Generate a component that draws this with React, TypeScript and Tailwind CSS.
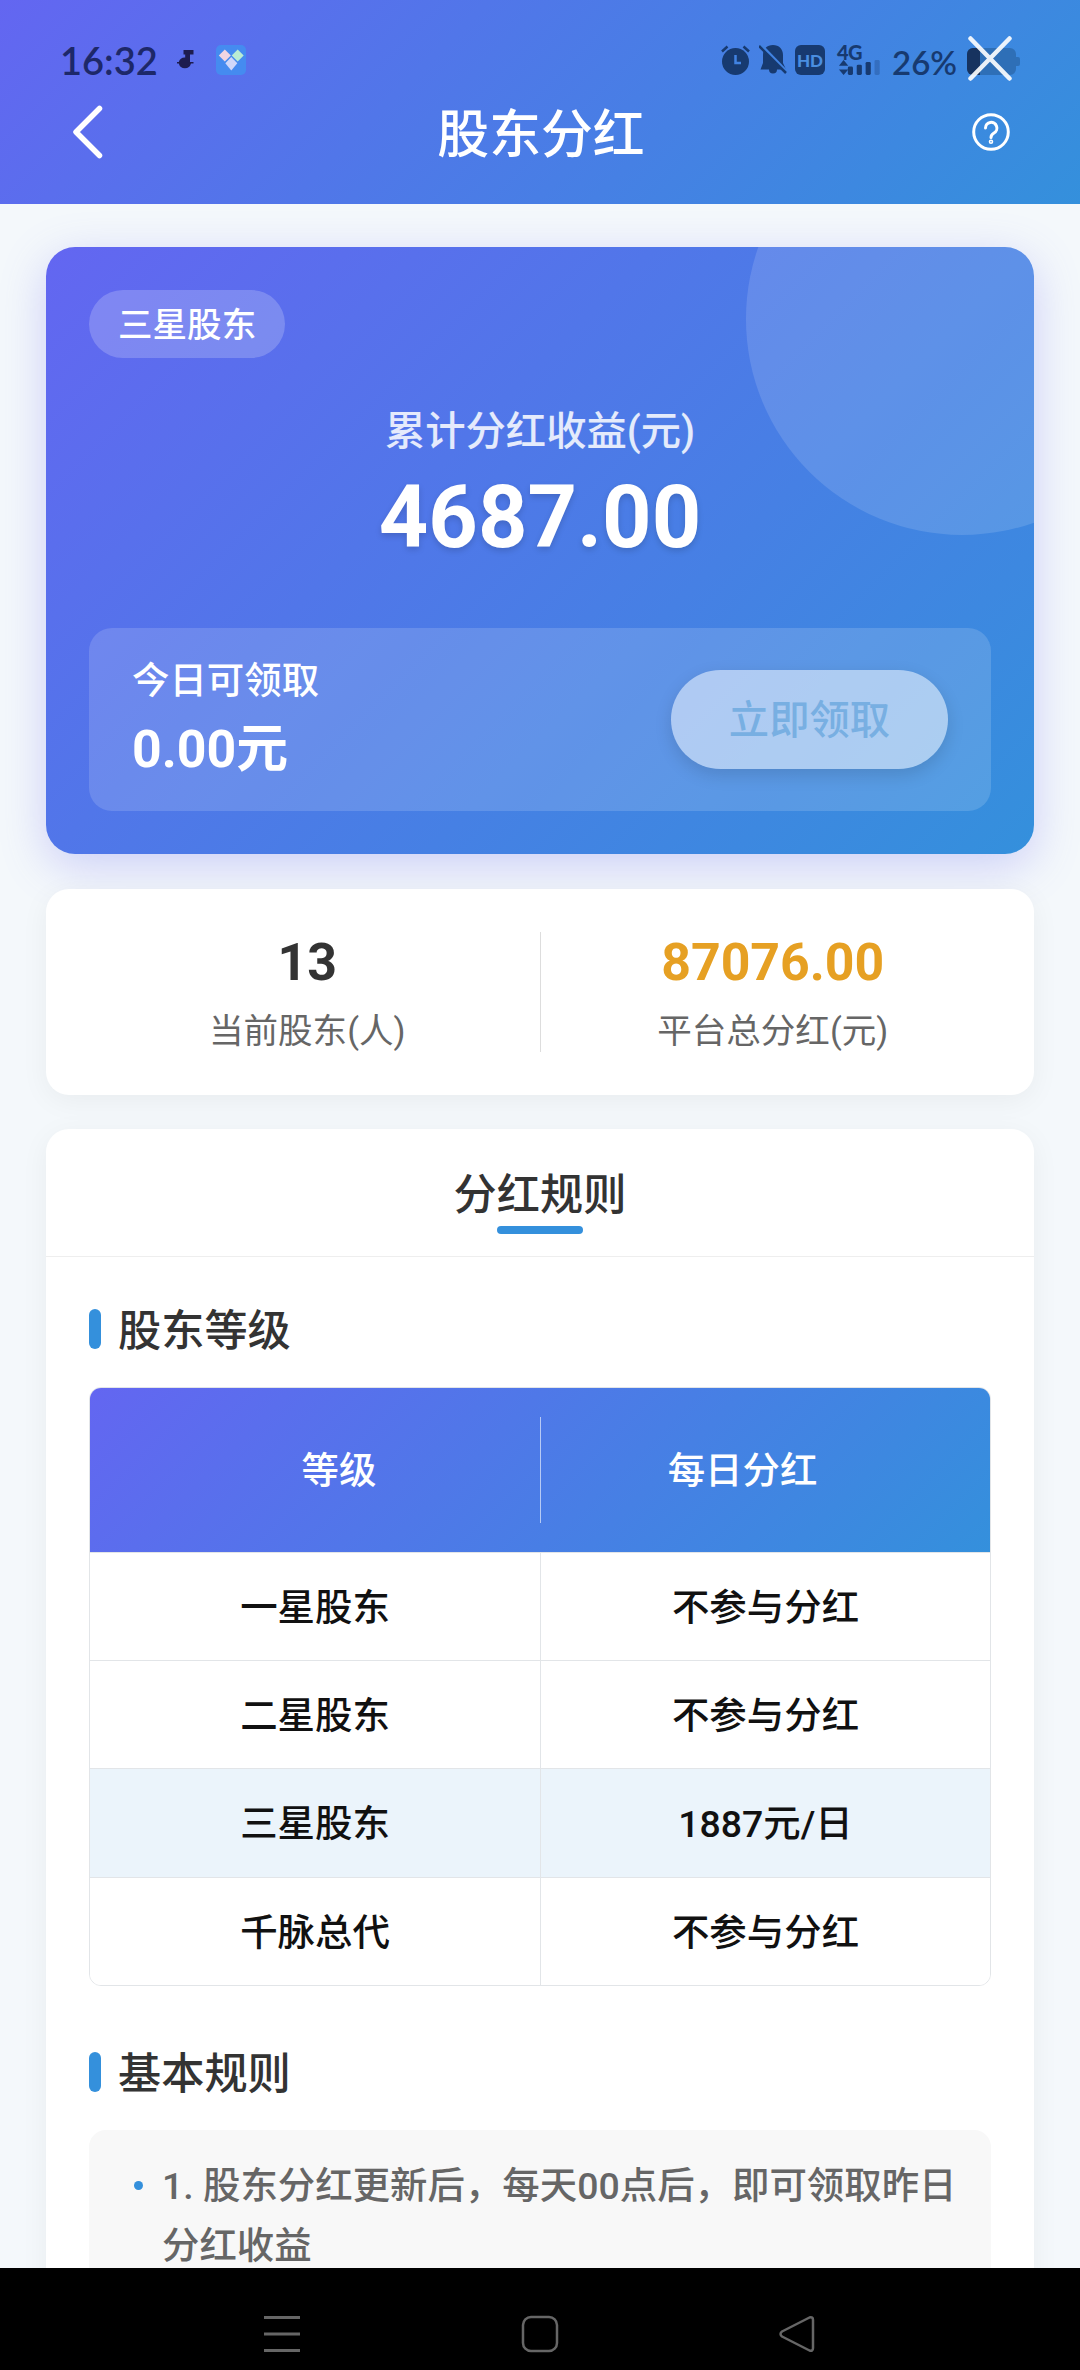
import type { ReactNode } from "react";

const levels = [
  { name: "一星股东", bonus: "不参与分红" },
  { name: "二星股东", bonus: "不参与分红" },
  { name: "三星股东", bonus: "1887元/日", current: true },
  { name: "千脉总代", bonus: "不参与分红" },
];

const rules = ["1. 股东分红更新后，每天00点后，即可领取昨日分红收益"];

const StatusBar = () => {
  return (
    <div className="flex h-[84px] justify-between pt-[36px] pr-[60px] pl-[60px] font-[Lato,sans-serif]">
      <div className="flex h-[48px] items-center text-[#1d2869]">
        <span className="w-[117px] text-[38px] leading-[48px] font-semibold">16:32</span>
        <svg className="h-[20px] w-[17px]" viewBox="0 0 17 20" fill="#1d1c4f">
          <path d="M6.500 0H16.500v4.500H13V12h3.500v1.500H14A6.300 6.300 0 0 1 1.800 13.500H0V12h1.800A6.300 6.300 0 0 1 8.200 7.500V4.500H6.500z" />
        </svg>
        <svg className="ml-[22px] size-[30px]" viewBox="0 0 30 30">
          <rect width="30" height="30" rx="5" fill="#458bf0" />
          <path d="M8.800 4.500l6 6-6 6-6-6z" fill="#f0d5e2" />
          <path d="M21.700 4.500l6 6-6 6-6-6z" fill="#b9ecd3" />
          <path d="M15.300 12l6 6.300-6 7.200-6-7.200z" fill="#cfd7fa" />
        </svg>
      </div>

      <div className="flex h-[48px] items-center text-[#173a70]">
        {/* Alarm */}
        <svg className="h-[30px] w-[29px]" viewBox="0 0 29 30" fill="none">
          <circle cx="14.500" cy="16.500" r="13.500" fill="currentColor" />
          <path d="M1 6.500l5.500-5M28 6.500l-5.500-5" stroke="currentColor" strokeWidth="2.500" />
          <path d="M14.500 10v8h5.500" stroke="#4183e2" strokeWidth="2.500" />
        </svg>
        {/* Muted bell */}
        <svg className="ml-[9px] h-[30px] w-[28px]" viewBox="0 0 28 30">
          <path d="M14 0c6 0 10 4 10 10v8l3 6.500H18a4 4 0 0 1-8 0H1.500L4 18v-8C4 4 8 0 14 0z" fill="currentColor" />
          <path d="M2 0l26 27" stroke="#4183e2" strokeWidth="3" />
          <path d="M0 1l27 27" stroke="currentColor" strokeWidth="2.500" />
        </svg>
        <span className="ml-[8px] flex size-[30px] items-center justify-center rounded-[6px] bg-[#173a70] text-[17px] leading-none font-black text-[#4a8ee0]">
          HD
        </span>
        <div className="ml-[12px] flex h-[30px] w-[46px] flex-col justify-between">
          <span className="h-[15px] text-[20px] leading-[15px] font-black tracking-[-0.5px]">4G</span>
          <svg className="h-[16px] w-[46px]" viewBox="0 0 46 16" fill="currentColor">
            <path d="M5.500 0l5 6H.5zM5.500 16l5-6H.5z" />
            <rect y="7" x="10" width="5.500" height="9" rx="1.500" />
            <rect y="5" x="19.500" width="5.500" height="11" rx="1.500" />
            <rect y="2" x="29" width="5.500" height="14" rx="1.500" />
            <rect y="0" x="38.500" width="5.500" height="16" rx="1.500" opacity=".3" />
          </svg>
        </div>
        <span className="ml-[9px] w-[75px] pt-[5px] text-[33px] leading-[43px] font-semibold">26%</span>
        <svg className="mt-[3px] h-[27px] w-[53px]" viewBox="0 0 53 27">
          <path d="M6 0H43a6 6 0 0 1 6 6v3h2a2 2 0 0 1 2 2v5a2 2 0 0 1-2 2h-2v3a6 6 0 0 1-6 6H6a6 6 0 0 1-6-6V6a6 6 0 0 1 6-6z" fill="#2e6fb7" />
          <path d="M6 0h7v27H6a6 6 0 0 1-6-6V6a6 6 0 0 1 6-6z" fill="#17335f" />
        </svg>
      </div>
    </div>
  );
};

const Header = () => {
  return (
    <header className="relative h-[204px] shrink-0 bg-[linear-gradient(135deg,#6366f1,#3490dc)]">
      <StatusBar />
      <div className="flex h-[96px] items-center justify-between pr-[70px] pl-[72px] text-white">
        <svg className="h-[54px] w-[38px]" viewBox="0 0 38 54" fill="none" stroke="currentColor" strokeWidth="5.500" strokeLinecap="round" strokeLinejoin="round">
          <path d="M27.500 3.500L4 27l23.500 23.500" />
        </svg>
        <h1 className="pt-[7px] text-[51.84px] leading-none font-medium">股东分红</h1>
        <svg className="h-[38px] w-[38px]" viewBox="0 0 38 38" fill="none" stroke="currentColor" strokeWidth="3" strokeLinecap="round">
          <circle cx="19" cy="19" r="17.300" />
          <path d="M13.500 15a5.700 5.700 0 1 1 8.500 5c-2 1.200-3 2.200-3 4.500" />
          <circle cx="19" cy="28.800" r=".8" />
        </svg>
      </div>

      {/* Floating close button over the status bar */}
      <svg className="absolute top-[35px] left-[967px] size-[46px]" viewBox="0 0 46 46" stroke="#fff" strokeOpacity=".9" strokeWidth="4.500" strokeLinecap="round">
        <path d="M3.500 3.500l39 40M42.500 3.500l-39 40" />
      </svg>
    </header>
  );
};

const BonusCard = () => {
  return (
    <section className="relative h-[607px] shrink-0 overflow-hidden rounded-[29px] bg-[linear-gradient(135deg,#6366f1,#3490dc)] px-[43px] pt-[43px] text-white">
      <div className="absolute -top-[144px] -right-[144px] size-[432px] rounded-full bg-white/[0.13]" />
      <div className="relative flex flex-col">
        <span className="flex h-[68px] items-center self-start rounded-full bg-white/20 px-[29px] pt-[3px] text-[34.56px] font-medium">
          三星股东
        </span>
        <p className="mt-[45px] text-center text-[40.32px] leading-[58px] font-medium text-white/85">累计分红收益(元)</p>
        <p className="mt-[6px] text-center text-[86.4px] leading-[102px] font-bold [text-shadow:0_3px_6px_rgba(0,0,0,0.15)]">
          4687.00
        </p>

        <div className="mt-[59px] flex h-[183px] items-center justify-between rounded-[23px] bg-white/15 px-[43px]">
          <div className="flex flex-col">
            <p className="pt-[2px] text-[37.44px] leading-[54px] font-medium">今日可领取</p>
            <p className="mt-[5px] text-[51.84px] leading-[74px] font-bold">0.00元</p>
          </div>
          <button className="h-[99px] w-[277px] rounded-full bg-white/50 pt-[3px] text-[40.32px] font-medium text-[#78afe2] shadow-[0_6px_17px_rgba(0,0,0,0.13)]">
            立即领取
          </button>
        </div>
      </div>
    </section>
  );
};

const Stat = ({ value, label, color }: { value: string; label: string; color: string }) => {
  return (
    <div className="flex flex-1 flex-col items-center pt-[4px]">
      <p className={`text-[51.84px] leading-[62px] font-bold ${color}`}>{value}</p>
      <p className="mt-[12px] text-[34.56px] leading-[50px] text-[#666]">{label}</p>
    </div>
  );
};

const SectionTitle = ({ children }: { children: ReactNode }) => {
  return (
    <div className="flex h-[60px] items-center">
      <span className="mr-[17px] h-[40px] w-[12px] rounded-full bg-[#3490dc]" />
      <h3 className="pt-[6px] text-[43.2px] leading-[60px] font-medium text-[#333]">{children}</h3>
    </div>
  );
};

const LevelTable = () => {
  return (
    <div className="mt-[28px] overflow-hidden rounded-[12px] border border-[#e2e5e8] text-[37.44px] font-medium">
      <div className="flex h-[164px] items-center bg-[linear-gradient(135deg,#6366f1,#3490dc)] py-[29px] text-white">
        <div className="flex h-full w-[451px] items-center justify-center border-r border-white/60 pt-[3px] pl-[48px]">等级</div>
        <div className="flex flex-1 items-center justify-center pt-[3px] pr-[46px]">每日分红</div>
      </div>
      {levels.map((level) => (
        <div
          key={level.name}
          className={`flex h-[108.2px] border-t border-[#e2e5e8] text-[#111] ${level.current ? "bg-[#ebf4fb]" : "bg-white"}`}
        >
          <div className="flex w-[451px] items-center justify-center border-r border-[#e2e5e8] pt-[3px]">{level.name}</div>
          <div className="flex flex-1 items-center justify-center pt-[3px]">{level.bonus}</div>
        </div>
      ))}
    </div>
  );
};

const NavBar = () => {
  return (
    <nav className="flex h-[102px] shrink-0 items-center justify-between bg-black pt-[30px] pr-[264px] pl-[263px] text-[#666]">
      <svg className="size-[38px]" viewBox="0 0 38 38" stroke="currentColor" strokeWidth="3">
        <path d="M1 2.500h36M1 19h36M1 35.500h36" />
      </svg>
      <svg className="size-[38px]" viewBox="0 0 38 38" fill="none" stroke="currentColor" strokeWidth="2.500">
        <rect x="2" y="2" width="34" height="34" rx="8" />
      </svg>
      <svg className="size-[38px]" viewBox="0 0 38 38" fill="none" stroke="currentColor" strokeWidth="2.500" strokeLinejoin="round">
        <path d="M31.500 2.500L4 16.500q-3 2.500 0 5l27.500 14q3.500 1 3.500-2.500V5q0-3.500-3.500-2.500z" />
      </svg>
    </nav>
  );
};

const App = () => {
  return (
    <div
      lang="zh-CN"
      className="flex h-[2370px] w-[1080px] flex-col overflow-hidden bg-[#f4f8fb] [font-family:Roboto,'Noto_Sans_CJK_SC',sans-serif]"
    >
      <Header />

      <main className="flex min-h-0 flex-1 flex-col overflow-hidden px-[46px] pt-[43px]">
        <div className="shrink-0 rounded-[29px] shadow-[0_12px_46px_rgba(99,102,241,0.28)]">
          <BonusCard />
        </div>

        {/* Totals */}
        <section className="relative mt-[35px] flex h-[206px] shrink-0 items-center rounded-[23px] bg-white px-[29px] shadow-[0_6px_29px_rgba(0,0,0,0.05)]">
          <Stat value="13" label="当前股东(人)" color="text-[#333]" />
          <div className="h-[120px] w-px bg-[#ddd]" />
          <Stat value="87076.00" label="平台总分红(元)" color="text-[#e6a023]" />
        </section>

        {/* Rules */}
        <section className="mt-[34px] shrink-0 rounded-[23px] bg-white shadow-[0_6px_29px_rgba(0,0,0,0.05)]">
          <div className="flex h-[128px] flex-col items-center border-b border-[#eee] pt-[37px]">
            <h2 className="text-[43.2px] leading-[60px] font-medium text-[#333]">分红规则</h2>
            <span className="h-[8px] w-[86px] rounded-full bg-[#3490dc]" />
          </div>
          <div className="px-[43px] pt-[42px]">
            <SectionTitle>股东等级</SectionTitle>
            <LevelTable />
            <div className="mt-[56px]">
              <SectionTitle>基本规则</SectionTitle>
            </div>
            <ul className="mt-[28px] rounded-[17px] bg-[#f8f8f8] py-[26px] pr-[29px] pl-[45px]">
              {rules.map((rule) => (
                <li key={rule} className="flex">
                  <span className="mt-[25px] mr-[19px] size-[9px] shrink-0 rounded-full bg-[#3490dc]" />
                  <p className="text-[37.44px] leading-[60px] font-medium text-[#666]">{rule}</p>
                </li>
              ))}
            </ul>
          </div>
        </section>
      </main>

      <NavBar />
    </div>
  );
};

export default App;
